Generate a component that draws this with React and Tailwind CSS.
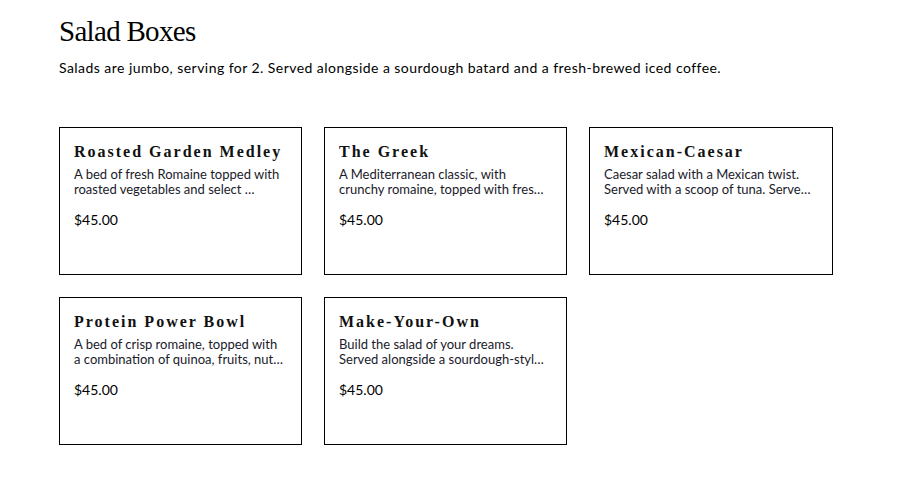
export default function App() {
  const items = [
    { t: "Roasted Garden Medley", a: "A bed of fresh Romaine topped with", b: "roasted vegetables and select …" },
    { t: "The Greek", a: "A Mediterranean classic, with", b: "crunchy romaine, topped with fres…" },
    { t: "Mexican-Caesar", a: "Caesar salad with a Mexican twist.", b: "Served with a scoop of tuna. Serve…" },
    { t: "Protein Power Bowl", a: "A bed of crisp romaine, topped with", b: "a combination of quinoa, fruits, nut…" },
    { t: "Make-Your-Own", a: "Build the salad of your dreams.", b: "Served alongside a sourdough-styl…" },
  ];
  return (
    <div className="bg-white min-h-[504px] w-[918px] text-black" style={{ fontFamily: "Lato, 'Liberation Sans', sans-serif" }}>
      <div className="pl-[59px] pt-[13px]">
        <h1 className="text-[29px] leading-[36px] tracking-[-0.7px]" style={{ fontFamily: "'Liberation Serif', serif" }}>Salad Boxes</h1>
        <p className="mt-[10px] text-[14px] leading-[18px] tracking-[0.45px]">Salads are jumbo, serving for 2. Served alongside a sourdough batard and a fresh-brewed iced coffee.</p>
        <div className="mt-[50px] grid grid-cols-[243px_243px_244px] gap-[22px]">
          {items.map((it) => (
            <div key={it.t} className="h-[148px] border border-black px-[14px] pt-[14px]">
              <h2 className="text-[16px] leading-[20px] font-bold tracking-[2px] text-[#111]" style={{ fontFamily: "'Liberation Serif', serif" }}>{it.t}</h2>
              <p className="mt-[5px] text-[13px] leading-[15px] text-[#1a1a2a] whitespace-nowrap">{it.a}</p>
              <p className="text-[13px] leading-[15px] text-[#1a1a2a] whitespace-nowrap">{it.b}</p>
              <p className="mt-[14px] text-[14px] leading-[18px]">$45.00</p>
            </div>
          ))}
        </div>
      </div>
    </div>
  );
}
